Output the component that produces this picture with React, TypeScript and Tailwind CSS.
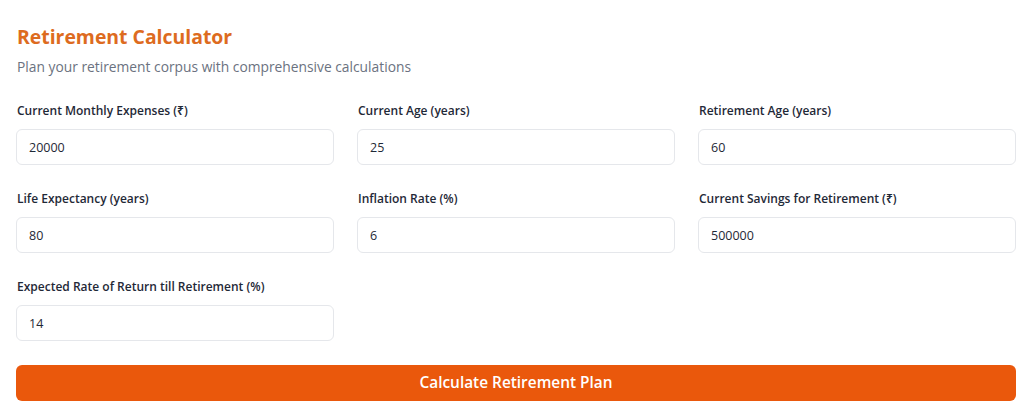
import React from "react";

const fields = [
  { label: "Current Monthly Expenses (₹)", value: "20000" },
  { label: "Current Age (years)", value: "25" },
  { label: "Retirement Age (years)", value: "60" },
  { label: "Life Expectancy (years)", value: "80" },
  { label: "Inflation Rate (%)", value: "6" },
  { label: "Current Savings for Retirement (₹)", value: "500000" },
  { label: "Expected Rate of Return till Retirement (%)", value: "14" },
];

const App = () => {
  return (
    <div
      className="min-h-screen bg-white px-4 pt-[23px] pr-2 text-[#1f2937]"
      style={{ fontFamily: '"Open Sans", "Noto Sans", sans-serif' }}
    >
      <h1 className="text-[19.4px] leading-7 font-bold text-[#dd6b20] pl-px">Retirement Calculator</h1>
      <p className="mt-1.5 text-[13.8px] leading-5 text-[#6b7280] pl-px">
        Plan your retirement corpus with comprehensive calculations
      </p>

      <div className="mt-6 grid grid-cols-3 gap-x-[23px] gap-y-6">
        {fields.map((f) => (
          <div key={f.label} className="flex flex-col">
            <label className="text-[12px] leading-5 font-semibold text-[#1f2937] mb-2 pl-px">{f.label}</label>
            <input
              defaultValue={f.value}
              className="h-9 w-full rounded-md border border-[#e5e7eb] bg-white px-3 text-[12.5px] text-[#1f2937] outline-none"
            />
          </div>
        ))}
      </div>

      <button className="mt-6 h-9 w-full rounded-md bg-[#ea580c] text-[15.4px] font-semibold text-white">
        Calculate Retirement Plan
      </button>
    </div>
  );
};

export default App;
